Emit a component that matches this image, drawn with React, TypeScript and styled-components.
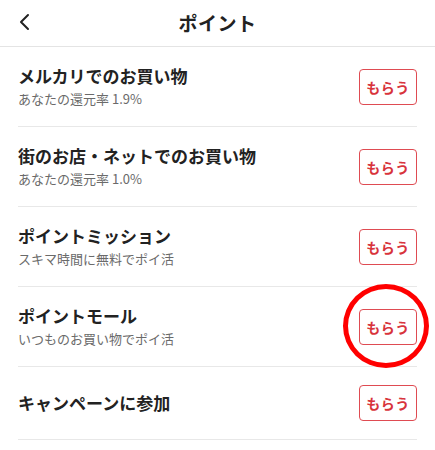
import React from "react";
import styled, { createGlobalStyle } from "styled-components";

const Global = createGlobalStyle`
  html, body { margin: 0; padding: 0; background: #fff; }
  body { font-family: "Noto Sans CJK JP", "Noto Sans", sans-serif; color: #222; }
`;

const Page = styled.div`
  position: relative;
  width: 435px;
  min-height: 450px;
  background: #fff;
`;

const Header = styled.header`
  height: 46px;
  display: flex;
  align-items: center;
  justify-content: center;
  position: relative;
  border-bottom: 1px solid #e4e4e4;
`;

const BackButton = styled.button`
  position: absolute;
  left: 12px;
  top: 10px;
  width: 24px;
  height: 24px;
  padding: 0;
  border: none;
  background: none;
  display: flex;
  align-items: center;
  justify-content: center;
`;

const Title = styled.h1`
  margin: 0;
  font-size: 19px;
  font-weight: 600;
  line-height: 46px;
  color: #222;
  letter-spacing: 0.5px;
`;

const List = styled.ul`
  list-style: none;
  margin: 0;
  padding: 0 18px;
`;

const Row = styled.li`
  display: flex;
  align-items: center;
  justify-content: space-between;
  padding: 18px 0;
  border-bottom: 1px solid #e8e8e8;
`;

const TextBlock = styled.div`
  display: flex;
  flex-direction: column;
  gap: 3px;
`;

const RowTitle = styled.div`
  font-size: 17px;
  font-weight: 600;
  line-height: 22px;
  color: #222;
`;

const RowSub = styled.div`
  font-size: 13px;
  line-height: 18px;
  color: #6a6a6a;
`;

const GetButton = styled.button`
  width: 58px;
  height: 36px;
  border: 1px solid #df4b52;
  border-radius: 4px;
  background: #fff;
  color: #d8343c;
  font-family: "Noto Sans CJK JP", sans-serif;
  font-size: 14px;
  font-weight: 600;
  padding: 0;
  letter-spacing: 0.5px;
`;

const Circle = styled.div`
  position: absolute;
  left: 343px;
  top: 284px;
  width: 76px;
  height: 74px;
  border: 5px solid #f00;
  border-radius: 50%;
  pointer-events: none;
`;

const items = [
  { title: "メルカリでのお買い物", sub: "あなたの還元率 1.9%" },
  { title: "街のお店・ネットでのお買い物", sub: "あなたの還元率 1.0%" },
  { title: "ポイントミッション", sub: "スキマ時間に無料でポイ活" },
  { title: "ポイントモール", sub: "いつものお買い物でポイ活" },
  { title: "キャンペーンに参加" },
];

export default function App() {
  return (
    <Page>
      <Global />
      <Header>
        <BackButton aria-label="戻る">
          <svg width="14" height="18" viewBox="0 0 14 18" fill="none">
            <path d="M11 2 L4 9 L11 16" stroke="#222" strokeWidth="2" strokeLinecap="round" strokeLinejoin="round" />
          </svg>
        </BackButton>
        <Title>ポイント</Title>
      </Header>
      <List>
        {items.map((it) => (
          <Row key={it.title}>
            <TextBlock>
              <RowTitle>{it.title}</RowTitle>
              {it.sub && <RowSub>{it.sub}</RowSub>}
            </TextBlock>
            <GetButton>もらう</GetButton>
          </Row>
        ))}
      </List>
      <Circle />
    </Page>
  );
}
